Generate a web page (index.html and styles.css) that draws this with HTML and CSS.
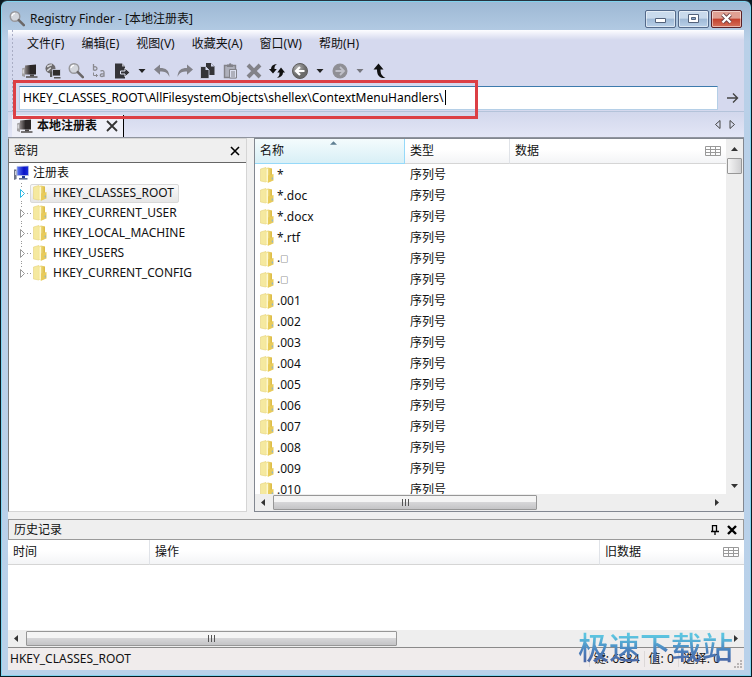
FILE: index.html
```html
<!DOCTYPE html>
<html lang="zh-CN">
  <head>
    <meta charset="UTF-8" />
    <meta name="viewport" content="width=device-width, initial-scale=1.0" />
    <title>Registry Finder</title>
    <link rel="stylesheet" href="styles.css">
  </head>
  <body>
    <svg class="defs" aria-hidden="true">
      <defs>
        <linearGradient id="gold" x1="0" x2="1">
          <stop offset="0" stop-color="#f8eda4" />
          <stop offset="1" stop-color="#dcb93f" />
        </linearGradient>
        <linearGradient id="screen" x1="0" x2="1">
          <stop offset="0" stop-color="#5e7cf0" />
          <stop offset="0.6" stop-color="#0a12c8" />
          <stop offset="1" stop-color="#1c2fdc" />
        </linearGradient>
        <linearGradient id="dark" x1="0" x2="1">
          <stop offset="0" stop-color="#8a8484" />
          <stop offset="0.5" stop-color="#2b2727" />
        </linearGradient>
        <radialGradient id="ball" cx="0.35" cy="0.3">
          <stop offset="0" stop-color="#b4b4b4" />
          <stop offset="1" stop-color="#6b6b6b" />
        </radialGradient>
      </defs>
      <symbol id="folder" viewBox="0 0 14 16">
        <path d="M.5 2 6 .5v14.500L.5 14z" fill="#f5e99f" stroke="#e6d27a" stroke-width="0.6" />
        <path d="M5.500 1.500 8 .5l4 1v12l-4 2-2.500-1z" fill="url(#gold)" />
        <path d="M6.500 2.500 8 1.500v13.500l-1.500-1z" fill="#fdf8cf" />
        <path d="M8 8.500 13.500 7v6.500L8 15.800z" fill="#e8cb5a" />
        <path d="M11.800 10.500h1.200v2h-1.200z" fill="#8fb6cf" />
      </symbol>
      <symbol id="pc" viewBox="0 0 16 16">
        <path d="M0 5.500 3 4.500v9.500l-3-1z" fill="#a2a0a2" />
        <path d="M.5 6.500h1.400v4H.5z" fill="#dcdcdf" />
        <path d="M3 2.500 14 1.500v10H3z" fill="url(#dark)" />
        <path d="M8 11.500h4v2H8z" fill="#4a4646" />
        <path d="M4 13.200h11.500v1.600H4z" fill="#5b5757" />
      </symbol>
      <symbol id="pc-blue" viewBox="0 0 16 16">
        <path d="M0 4.500h2.600V14L0 15z" fill="#6e7487" />
        <path d="M1 6h1v4H1z" fill="#cdd3df" />
        <path d="M3 1.500 14.500 1v9.500H3z" fill="url(#screen)" stroke="#b8c2e4" stroke-width="0.7" />
        <path d="M8 11h3v2H8z" fill="#233c92" />
        <path d="M5 13h8.500v1.600H5z" fill="#5c6b93" />
      </symbol>
      <symbol id="lens" viewBox="0 0 16 16">
        <circle cx="6" cy="5.500" r="4.800" fill="#d3d6dc" stroke="#98989c" stroke-width="1.400" />
        <path d="M3 5a3.200 3.200 0 0 1 3-2.700" fill="none" stroke="#fff" stroke-width="1.300" />
        <path d="m9.800 9.200 5 5" stroke="#6b6868" stroke-width="2.600" stroke-linecap="round" />
      </symbol>
    </svg>

    <div class="window">
      <header class="titlebar">
        <svg class="icon"><use href="#lens" /></svg>
        <span class="caption">Registry Finder - [本地注册表]</span>
        <button class="sys" aria-label="最小化">
          <svg viewBox="0 0 31 17"><path d="M10.500 8.500h10v4h-10z" fill="#fff" stroke="#53627b" /></svg>
        </button>
        <button class="sys" aria-label="最大化">
          <svg viewBox="0 0 31 17"><path d="M10.500 4.500h10v8h-10z" fill="#fff" stroke="#53627b" /><path d="M13.500 7.500h4v2h-4z" fill="#8aa6c8" stroke="#53627b" /></svg>
        </button>
        <button class="sys sys-close" aria-label="关闭">
          <svg viewBox="0 0 31 17"><path d="m11.500 4.500 8 8m0-8-8 8" stroke="#6b4045" stroke-width="4" /><path d="m11.500 4.500 8 8m0-8-8 8" stroke="#fff" stroke-width="2.400" /></svg>
        </button>
      </header>

      <div class="client">
        <div class="bars">
          <nav class="menu">
            <button>文件(F)</button>
            <button>编辑(E)</button>
            <button>视图(V)</button>
            <button>收藏夹(A)</button>
            <button>窗口(W)</button>
            <button>帮助(H)</button>
          </nav>

          <div class="toolbar">
            <button aria-label="本地注册表"><svg class="icon"><use href="#pc" /></svg></button>
            <button aria-label="远程注册表">
              <svg class="icon" viewBox="0 0 16 16">
                <circle cx="5.500" cy="5.500" r="5" fill="#6d6b6d" />
                <path d="M2 3.500c2 0 2-2 5-1.500M2 7.500c2 0 2-2.500 4-2.500" stroke="#d5d5d8" stroke-width="1.600" fill="none" />
                <path d="M7.500 6.500h8v6.500h-8z" fill="#2e2c2c" stroke="#d5d9ee" stroke-width="0.8" />
                <path d="M5 8.500h2.200V14H5zM9 14h6.500v1.500H9z" fill="#555" />
              </svg>
            </button>
            <button aria-label="查找"><svg class="icon"><use href="#lens" /></svg></button>
            <button aria-label="替换">
              <svg class="icon" viewBox="0 0 16 16" fill="none" stroke="#8a8a90" stroke-width="1.300">
                <path d="M2.500 1v6.500M2.500 4.500a1.900 1.700 0 1 1 0 2" />
                <path d="M9.500 8.200c1-1 3.500-.8 3.500 1v4.500M13 10.700c-2 0-3.700.2-3.700 1.500 0 2 3.200 1.500 3.700 0" />
                <path d="M2.500 9.500v3h4M5 11l1.500 1.500L5 14" stroke-width="1" />
              </svg>
            </button>
            <button class="export" aria-label="导出">
              <svg class="icon" viewBox="0 0 16 16">
                <path d="M0 .5h7l3 3v12H0z" fill="#343438" />
                <path d="M7 .5v3h3z" fill="#b5b5bd" />
                <path d="M5.500 8h4.500V5l5 4.500-5 4.500v-3H5.500z" fill="#343438" stroke="#e4e6f4" />
              </svg>
            </button>
            <button class="drop" aria-label="导出选项"><svg viewBox="0 0 8 5"><path d="M.5 0h7L4 4z" fill="#222" /></svg></button>
            <button aria-label="撤销">
              <svg class="icon" viewBox="0 0 16 16"><path d="M0 6.500 6 1.500V5c6 0 9 2 9.500 9C13.500 9.500 11 8.500 6 8.500v3.200z" fill="#828289" /></svg>
            </button>
            <button aria-label="重做">
              <svg class="icon" viewBox="0 0 16 16"><path d="M16 6.500 10 1.500V5C4 5 1 7 .5 14 2.500 9.500 5 8.500 10 8.500v3.200z" fill="#828289" /></svg>
            </button>
            <button aria-label="复制">
              <svg class="icon" viewBox="0 0 16 16">
                <path d="M6 0h5l3.500 3.500V12H6z" fill="#343438" />
                <path d="M.5 3.500h5L9 7v8.500H.5z" fill="#343438" stroke="#d5d9ee" stroke-width="0.8" />
                <path d="M5.500 3.500V7H9zM11 0v3.500h3.500z" fill="#d5d9ee" />
              </svg>
            </button>
            <button aria-label="粘贴">
              <svg class="icon" viewBox="0 0 16 16">
                <path d="M1.500 2.500h11v12h-11z" fill="#aeb0bb" stroke="#828289" stroke-width="1.400" />
                <path d="M4 1.500h2a1.200 1.200 0 0 1 2.400 0H10V4H4z" fill="#828289" />
                <path d="M6.500 6.500h7V15h-7z" fill="#dcdfee" stroke="#828289" />
                <path d="M8 9h4M8 11h4M8 13h4" stroke="#828289" />
              </svg>
            </button>
            <button aria-label="删除">
              <svg class="icon" viewBox="0 0 16 16"><path d="m2 2 12 12M14 2 2 14" stroke="#828289" stroke-width="4" /></svg>
            </button>
            <button aria-label="刷新">
              <svg class="icon" viewBox="0 0 16 16" fill="#111">
                <path d="M0 6h2c0-3 2-4.500 6-5-2 1.200-2.600 2.500-2.500 5h2.300L4 10.500z" />
                <path d="M16 9.500h-2c0 3-2 4.500-6 5.500 2-1.500 2.600-3 2.500-5.500H8.300L12 4.500z" />
              </svg>
            </button>
            <button aria-label="后退">
              <svg class="icon" viewBox="0 0 16 16"><circle cx="8" cy="8" r="7.500" fill="url(#ball)" stroke="#5c5c5c" /><path d="M12.500 8h-8M8 4 4 8l4 4" stroke="#fff" stroke-width="2.200" fill="none" /></svg>
            </button>
            <button class="drop" aria-label="后退记录"><svg viewBox="0 0 8 5"><path d="M.5 0h7L4 4z" fill="#222" /></svg></button>
            <button aria-label="前进">
              <svg class="icon" viewBox="0 0 16 16"><circle cx="8" cy="8" r="7.500" fill="#8f8f95" /><path d="M3.500 8h8M8 4l4 4-4 4" stroke="#bfc0c9" stroke-width="1.800" fill="none" /></svg>
            </button>
            <button class="drop" aria-label="前进记录"><svg viewBox="0 0 8 5"><path d="M.5 0h7L4 4z" fill="#77777f" /></svg></button>
            <button aria-label="上一级">
              <svg class="icon" viewBox="0 0 16 16"><path d="M1.500 6.500 6.500.5l5 6h-3C8.500 11 10 13 13.500 15 7.500 15.500 5 12.500 5 6.500z" fill="#111" /></svg>
            </button>
          </div>

          <div class="address">
            <input type="text" aria-label="地址" value="HKEY_CLASSES_ROOT\AllFilesystemObjects\shellex\ContextMenuHandlers\" />
            <button aria-label="转到">
              <svg class="go" viewBox="0 0 12 12"><path d="M0 6h10M6 1.500 10.500 6 6 10.500" fill="none" stroke="#444" stroke-width="1.400" /></svg>
            </button>
            <span class="caret"></span>
            <div class="highlight"></div>
          </div>
        </div>

        <div class="tabs">
          <div class="tab">
            <svg class="icon"><use href="#pc" /></svg>
            <strong>本地注册表</strong>
            <button aria-label="关闭标签"><svg class="x-big" viewBox="0 0 12 12"><path d="m1 1 10 10M11 1 1 11" stroke="#333" stroke-width="1.800" /></svg></button>
          </div>
          <div class="tab-nav">
            <button aria-label="向左"><svg viewBox="0 0 6 9"><path d="M5.500 .5v8L1 4.500z" fill="none" stroke="#444" /></svg></button>
            <button aria-label="向右"><svg viewBox="0 0 6 9"><path d="M.5 .5v8L5 4.500z" fill="none" stroke="#444" /></svg></button>
          </div>
        </div>

        <main class="panes">
          <section class="keys">
            <div class="pane-title">
              <span>密钥</span>
              <button aria-label="关闭"><svg class="x-small" viewBox="0 0 10 10"><path d="m1 1 8 8M9 1 1 9" stroke="#000" stroke-width="1.600" /></svg></button>
            </div>
            <div class="tree">
              <div class="root"><svg class="icon"><use href="#pc-blue" /></svg>注册表</div>
              <ul>
                <li class="open"><svg class="twist" viewBox="0 0 7 9"><path d="M1.500 .5v8l4-4z" /></svg><span class="node selected"><svg class="folder"><use href="#folder" /></svg>HKEY_CLASSES_ROOT</span></li>
                <li><svg class="twist" viewBox="0 0 7 9"><path d="M1.500 .5v8l4-4z" /></svg><span class="node"><svg class="folder"><use href="#folder" /></svg>HKEY_CURRENT_USER</span></li>
                <li><svg class="twist" viewBox="0 0 7 9"><path d="M1.500 .5v8l4-4z" /></svg><span class="node"><svg class="folder"><use href="#folder" /></svg>HKEY_LOCAL_MACHINE</span></li>
                <li><svg class="twist" viewBox="0 0 7 9"><path d="M1.500 .5v8l4-4z" /></svg><span class="node"><svg class="folder"><use href="#folder" /></svg>HKEY_USERS</span></li>
                <li><svg class="twist" viewBox="0 0 7 9"><path d="M1.500 .5v8l4-4z" /></svg><span class="node"><svg class="folder"><use href="#folder" /></svg>HKEY_CURRENT_CONFIG</span></li>
              </ul>
            </div>
          </section>

          <section class="values">
            <div class="list">
              <table>
                <thead>
                  <tr>
                    <th class="col-name sorted">名称<svg class="sort" viewBox="0 0 8 4"><path d="M0 4 4 0l4 4z" fill="#5f7f93" /></svg></th>
                    <th class="col-type">类型</th>
                    <th class="col-data"><div>数据<svg class="grid" viewBox="0 0 16 10"><path d="M.5.5h15v9H.5zM0 3.500h16M0 6.500h16M5.500 0v10M10.500 0v10" /></svg></div></th>
                  </tr>
                </thead>
                <tbody id="rows"></tbody>
              </table>
            </div>
            <div class="vscroll">
              <svg class="arrow" viewBox="0 0 8 8"><path d="M0 6h7L3.500 2z" /></svg>
              <div class="thumb"></div>
              <svg class="arrow end" viewBox="0 0 8 8"><path d="M0 2h7L3.500 6z" /></svg>
            </div>
            <div class="hscroll">
              <svg class="arrow" viewBox="0 0 8 8"><path d="M6 0v7L2 3.500z" /></svg>
              <div class="thumb thumb-list"><i></i><i></i><i></i></div>
              <svg class="arrow end" viewBox="0 0 8 8"><path d="M2 0v7l4-3.500z" /></svg>
            </div>
          </section>
        </main>

        <section class="history">
          <div class="pane-title">
            <span>历史记录</span>
            <button aria-label="固定"><svg class="pin" viewBox="0 0 8 10"><path d="M1.500 6V.5h4V6M0 6.500h8M4 6.500V10M5.500.5V6" fill="none" stroke="#000" stroke-width="1.300" /></svg></button>
            <button aria-label="关闭"><svg class="x-small" viewBox="0 0 10 10"><path d="m1 1 8 8M9 1 1 9" stroke="#000" stroke-width="2.400" /></svg></button>
          </div>
          <table>
            <thead>
              <tr>
                <th class="col-time">时间</th>
                <th>操作</th>
                <th class="col-old"><div>旧数据<svg class="grid" viewBox="0 0 16 10"><path d="M.5.5h15v9H.5zM0 3.500h16M0 6.500h16M5.500 0v10M10.500 0v10" /></svg></div></th>
              </tr>
            </thead>
          </table>
          <div class="log"></div>
          <div class="hscroll">
            <svg class="arrow" viewBox="0 0 8 8"><path d="M6 0v7L2 3.500z" /></svg>
            <div class="thumb thumb-log"><i></i><i></i><i></i></div>
            <svg class="arrow end" viewBox="0 0 8 8"><path d="M2 0v7l4-3.500z" /></svg>
          </div>
        </section>

        <footer class="status">
          <span class="path">HKEY_CLASSES_ROOT</span>
          <span class="cell">键: 6584</span>
          <span class="cell">值: 0</span>
          <span class="cell">选择: 0</span>
          <svg class="grip" viewBox="0 0 9 9"><path d="M7 1h2v2H7zM4 4h2v2H4zM7 4h2v2H7zM1 7h2v2H1zM4 7h2v2H4zM7 7h2v2H7z" fill="#b9b4b4" /></svg>
        </footer>
      </div>
      <div class="watermark">极速下载站</div>
    </div>

    <script>
      const box = '<span class="box">□</span>';
      const names = ["*", "*.doc", "*.docx", "*.rtf", "." + box, "." + box];
      for (let i = 1; i <= 10; i++) {
        names.push("." + String(i).padStart(3, "0"));
      }

      document.getElementById("rows").innerHTML = names
        .map(
          (name) =>
            `<tr><td><div class="item"><svg class="folder"><use href="#folder" /></svg><span>${name}</span></div></td><td>序列号</td><td></td></tr>`
        )
        .join("");
    </script>
  </body>
</html>
```

FILE: styles.css
```css
* {
  box-sizing: border-box;
}
body {
  margin: 0;
  background: #0b1a22;
  font-family: "Noto Sans", "Noto Sans CJK SC", sans-serif;
  font-size: 12px;
  line-height: 16px;
  color: #111;
}
button {
  display: flex;
  align-items: center;
  justify-content: center;
  margin: 0;
  padding: 0;
  border: 0;
  background: none;
  font: inherit;
  color: inherit;
}
svg {
  display: block;
  flex: none;
}
.defs {
  position: absolute;
  width: 0;
  height: 0;
}
.icon {
  width: 16px;
  height: 16px;
}
.folder {
  width: 14px;
  height: 16px;
}

/* window frame */
.window {
  position: relative;
  display: flex;
  flex-direction: column;
  height: 100vh;
  padding: 0 7px 6px 6px;
  border: 1px solid #0b1a22;
  border-top-color: #26333f;
  border-radius: 7px 7px 0 0;
  background: linear-gradient(#9db8d4, #b9d0e8 40px, #b9d1ea);
  box-shadow: inset 0 0 0 1px #7fd3ee;
}
.titlebar {
  display: flex;
  align-items: center;
  gap: 2px;
  height: 29px;
  padding: 6px 2px 0;
}
.caption {
  flex: 1;
  padding-left: 3px;
}
.sys {
  width: 31px;
  height: 18px;
  border: 1px solid #53698a;
  border-radius: 2px;
  background: linear-gradient(#c9daec 45%, #9fb9d6 50%, #b9d0e8);
  box-shadow: inset 0 0 0 1px rgba(255, 255, 255, 0.5);
}
.sys svg {
  width: 31px;
  height: 17px;
}
.sys-close {
  border-color: #5b2026;
  background: linear-gradient(#e0a093 45%, #c3402c 50%, #d5705a);
}
.client {
  flex: 1;
  display: flex;
  flex-direction: column;
  min-height: 0;
  margin: 0 0 0 1px;
  background: #f0f0f0;
}

/* menu, toolbar, address */
.bars {
  background:
    radial-gradient(circle, #a9adc4 1px, transparent 1px) 3px 3px / 3px 4px repeat-y,
    linear-gradient(#fdfdff, #d5d9ee 10px, #d5d9ee);
  border-bottom: 1px solid #b4c3da;
}
.menu {
  display: flex;
  height: 28px;
  padding-left: 19px;
  gap: 17px;
}
.toolbar {
  display: flex;
  align-items: center;
  height: 26px;
  padding-left: 10px;
}
.toolbar button {
  width: 23px;
}
.toolbar .export {
  padding-left: 3px;
}
.toolbar .drop {
  width: 17px;
}
.drop svg {
  width: 8px;
  height: 5px;
}
.address {
  position: relative;
  display: flex;
  align-items: center;
  height: 27px;
  padding-left: 11px;
}
.address input {
  flex: 1;
  height: 24px;
  padding: 0 3px;
  border: 1px solid #b5cfe7;
  border-top-color: #3d7bad;
  background: #fff;
  font: inherit;
  color: #000;
}
.address button {
  width: 26px;
  padding-left: 3px;
}
.go {
  width: 12px;
  height: 12px;
}
.caret {
  position: absolute;
  left: 437px;
  top: 6px;
  width: 1px;
  height: 15px;
  background: #000;
}
.highlight {
  position: absolute;
  left: 5px;
  top: -4px;
  width: 465px;
  height: 39px;
  border: 3px solid #dc3f45;
}

/* tabs */
.tabs {
  display: flex;
  justify-content: space-between;
  height: 26px;
  padding-left: 4px;
  background: linear-gradient(#d2d7ec, #e3e6f6);
  border-bottom: 1px solid #8f949e;
}
.tab {
  display: flex;
  align-items: center;
  gap: 4px;
  margin-top: 3px;
  padding: 0 5px;
  border-right: 1px solid #000;
  background: #eff0f8;
}
.tab button {
  margin-left: 5px;
}
.x-big {
  width: 12px;
  height: 12px;
}
.tab-nav {
  display: flex;
  gap: 8px;
  padding-right: 8px;
}
.tab-nav svg {
  width: 7px;
  height: 9px;
}

/* panes */
.panes {
  flex: 1;
  display: flex;
  gap: 7px;
  min-height: 0;
}
.pane-title {
  display: flex;
  align-items: center;
  gap: 8px;
  padding: 0 6px 0 5px;
  border: 1px solid #9a9a9a;
  background: #efefef;
}
.pane-title span {
  flex: 1;
}
.x-small {
  width: 10px;
  height: 10px;
}
.keys {
  display: flex;
  flex-direction: column;
  width: 239px;
  background: #fff;
  border: 1px solid #d5d5d5;
  border-left-color: #777;
}
.keys .pane-title {
  height: 24px;
  border-width: 0 0 1px;
  border-color: #666;
}
.tree {
  padding: 0 0 0 5px;
}
.root {
  display: flex;
  align-items: center;
  gap: 3px;
  height: 20px;
}
.tree ul {
  margin: 0;
  padding: 0 0 0 5px;
  list-style: none;
}
/* dotted branch lines */
.tree li {
  display: flex;
  align-items: center;
  height: 20px;
  background:
    repeating-linear-gradient(#999 0 1px, transparent 1px 3px) 2px 0 / 1px 100% no-repeat,
    repeating-linear-gradient(90deg, #999 0 1px, transparent 1px 3px) 8px 10px / 6px 1px no-repeat;
}
.tree li:last-child {
  background-size: 1px 6px, 6px 1px;
}
.twist {
  width: 7px;
  height: 13px;
  background: #fff;
}
.twist path {
  fill: #fff;
  stroke: #999;
}
.open .twist path {
  stroke: #2cb8e4;
}
.node {
  display: flex;
  align-items: center;
  gap: 6px;
  height: 19px;
  margin-left: 4px;
  padding: 0 4px 0 2px;
  border: 1px solid transparent;
  border-radius: 2px;
}
.selected {
  border-color: #d9d9d9;
  background: linear-gradient(#fafafa, #e6e6e6);
}

/* value list */
.values {
  flex: 1;
  display: grid;
  grid-template-columns: 1fr 17px;
  grid-template-rows: minmax(0, 1fr) 17px;
  min-width: 0;
  border: 1px solid #828790;
  background: #fff;
}
.list {
  overflow: hidden;
}
table {
  width: 100%;
  border-collapse: separate;
  border-spacing: 0;
  table-layout: fixed;
}
th,
td {
  padding: 0 5px;
  text-align: left;
  font-weight: normal;
}
th {
  position: relative;
  height: 25px;
  border-right: 1px solid #e0e3e8;
  border-bottom: 1px solid #d5d5d5;
  background: linear-gradient(#fff 45%, #f3f4f6);
}
th:last-child {
  border-right: 0;
}
th div {
  display: flex;
  align-items: center;
  justify-content: space-between;
}
td {
  height: 21px;
}
.col-name {
  width: 150px;
}
.col-type {
  width: 105px;
}
.sorted {
  border-color: #96d9f9;
  background: linear-gradient(#f4fbfd, #d8eff6);
}
.sort {
  position: absolute;
  top: 2px;
  left: 50%;
  width: 7px;
  height: 4px;
}
.item {
  display: flex;
  align-items: center;
  gap: 3px;
}
.box {
  font-size: 8px;
}
.grid {
  width: 16px;
  height: 10px;
  fill: none;
  stroke: #999;
}

/* scroll bars */
.vscroll,
.hscroll {
  display: flex;
  align-items: center;
  background: #eee;
}
.vscroll {
  flex-direction: column;
  padding: 6px 0 4px;
  gap: 5px;
}
.vscroll .thumb {
  width: 15px;
  height: 16px;
  background: linear-gradient(90deg, #f5f5f5, #cfcfd1);
}
.hscroll {
  grid-column: 1 / -1;
  height: 17px;
  padding: 0 4px;
  gap: 6px;
}
.arrow {
  width: 8px;
  height: 8px;
  fill: #333;
}
.vscroll .end {
  margin-top: auto;
}
.hscroll .end {
  margin-left: auto;
}
.thumb {
  display: flex;
  align-items: center;
  justify-content: center;
  gap: 2px;
  height: 15px;
  border: 1px solid #979797;
  border-radius: 1px;
  background: linear-gradient(#f5f5f5 45%, #d6d6d8 50%, #c4c4c6);
}
.thumb i {
  width: 1px;
  height: 7px;
  background: #555;
}
.thumb-list {
  width: 55%;
}
.thumb-log {
  width: 51%;
}
.values .hscroll .end {
  margin-right: 18px;
}

/* history */
.history {
  margin-top: 7px;
  background: #fff;
  border-bottom: 1px solid #8a8a8a;
}
.history .pane-title {
  height: 21px;
}
.pin {
  width: 8px;
  height: 10px;
}
.col-time {
  width: 142px;
}
.col-old {
  width: 144px;
}
.log {
  height: 65px;
}

/* status bar */
.status {
  display: flex;
  align-items: center;
  height: 22px;
  padding: 0 2px;
  background: #f0ecec;
}
.path {
  flex: 1;
}
.cell {
  padding: 0 4px;
  border-left: 1px solid #dcd8d8;
}
.grip {
  align-self: flex-end;
  width: 9px;
  height: 9px;
  margin: 0 0 2px 9px;
}
.watermark {
  position: absolute;
  right: 18px;
  bottom: 11px;
  font-size: 31px;
  line-height: 36px;
  font-weight: 500;
  color: transparent;
  background: linear-gradient(#5cc4e0 20%, #4a80bd 60%, #4a5f9e);
  -webkit-background-clip: text;
  background-clip: text;
}
```
